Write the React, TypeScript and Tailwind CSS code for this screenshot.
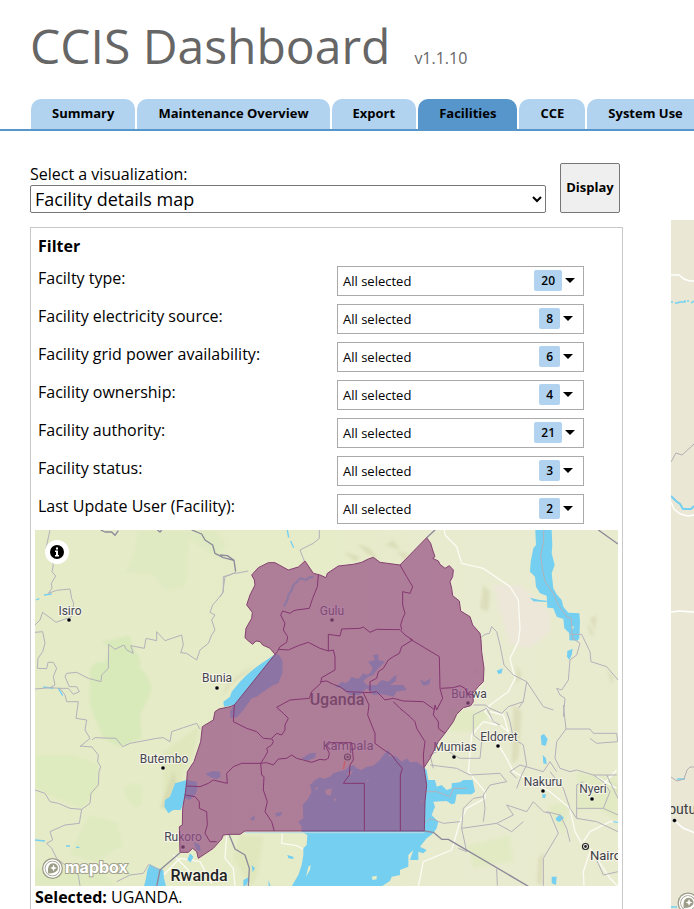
import React from "react";

const tabs = ["Summary", "Maintenance Overview", "Export", "Facilities", "CCE", "System Use"];

const filters = [
  { id: "type", label: "Facilty type:", count: 20 },
  { id: "electricity", label: "Facility electricity source:", count: 8 },
  { id: "grid", label: "Facility grid power availability:", count: 6 },
  { id: "ownership", label: "Facility ownership:", count: 4 },
  { id: "authority", label: "Facility authority:", count: 21 },
  { id: "status", label: "Facility status:", count: 3 },
  { id: "user", label: "Last Update User (Facility):", count: 2 },
];

const UGANDA =
  "M613 540 735 388 720 370 698 360 690 350 678 348 668 358 652 345 645 338 648 310 665 280 667 262 650 240 660 210 675 180 673 165 665 150 685 128 715 113 735 113 775 135 805 126 825 108 850 145 870 150 888 158 892 145 925 123 970 118 995 112 1015 102 1030 97 1050 112 1110 120 1190 38 1202 55 1208 75 1215 95 1208 100 1225 108 1230 118 1245 130 1258 122 1270 135 1268 155 1260 170 1265 190 1268 212 1288 228 1292 258 1320 275 1328 300 1350 325 1353 345 1355 380 1362 430 1360 470 1345 485 1328 505 1330 530 1322 542 1300 548 1280 568 1270 590 1245 625 1225 650 1200 700 1182 728 1190 780 1185 830 1183 918 645 918 630 928 600 928 580 930 575 942 550 970 505 1000 500 980 488 970 475 982 450 982 448 905 457 900 458 850 465 810 470 770 472 740 492 710 512 650 517 605 550 585 555 560 567 552 600 545Z";

const DISTRICTS = [
  "M865 150 862 185 848 220 838 250 800 255 790 258 780 265 758 258 752 270 765 295 760 315 773 335 770 352 750 365 742 380 735 390",
  "M745 373 775 375 805 362 835 352 870 370 895 378 910 375 915 395 915 435 875 458 872 475 845 500 838 520 780 525 740 547 760 565 775 580 765 600 765 615 755 630 740 625 725 640 730 650 725 660 710 670 713 680 705 695 692 715",
  "M895 378 895 328 930 333 935 312 990 310 1000 306 1020 322 1040 313 1110 314 1125 330 1148 345",
  "M1110 120 1130 155 1148 185 1140 205 1118 200 1118 240 1125 265 1118 280 1112 300 1115 314",
  "M1148 345 1115 365 1108 385 1090 395 1075 405 1060 430 1045 440 1040 460 1020 470 1020 500",
  "M1140 342 1228 395 1230 490 1238 520 1220 555 1215 540 1210 570 1225 590 1225 610 1245 625",
  "M1232 490 1270 488 1290 482 1305 490 1312 505 1328 510",
  "M872 470 890 468 910 478 930 485 950 500 1020 503 1040 500 1065 525 1090 520 1120 528 1180 530 1215 555",
  "M1000 503 1010 525 1017 540 1013 570 1025 600 1035 625 1035 655 1055 670 1085 690 1100 710 1117 730 1111 750 1111 918",
  "M1090 530 1110 550 1140 575 1155 590 1160 610 1185 650 1180 690 1182 728",
  "M692 715 710 713 730 720 745 702 770 700 785 690 800 700 820 705 845 712 870 703 885 705 895 700 898 685 888 665 900 653 965 653 968 680 970 705 960 720 958 750 940 775 1003 775 1003 918",
  "M692 715 695 750 702 755 700 795 712 830 705 860 725 890 733 918",
  "M613 540 610 590 650 610 680 620 700 640 725 642",
  "M692 715 635 715 610 725 590 745 592 775 570 770 550 765 535 775 510 785 470 783",
  "M465 810 495 815 508 830 508 850 530 860 532 900 525 925 540 950 560 950",
];

const BORDERS = [
  "M60 15 48 70 60 95 70 120 66 140 77 153 64 175 66 190 55 205 80 196 120 192 125 220 131 235 125 275 78 292 38 262 30 285 15 300",
  "M15 322 38 320 45 355 38 380 24 400 22 430 50 431 54 412 70 412 80 430 70 455 75 480 60 488 15 492 M60 488 90 490 105 510 110 530 145 530 138 580 170 585 165 615 180 640 150 665",
  "M85 490 115 490 130 508 148 500 140 485 118 485 105 455 110 445 140 442 175 460 213 470 215 450 235 430 236 358 255 373 282 360 290 375 310 385 302 362 343 370 348 340 380 347 380 320 405 347 455 330 460 360 452 383 470 385 500 405 510 375 535 355 545 330 555 315 545 285 555 270 540 262 548 240 578 205 585 155 610 145 617 145 655 138",
  "M570 215 580 200 580 155 600 150 617 142",
  "M823 108 810 75 850 55 868 40 868 15",
  "M15 795 45 805 60 830 85 835 120 850 155 853 180 835 183 805 205 780 207 740 212 725 203 710 205 690 186 666 150 663 M186 645 195 638 258 640 278 665 300 655 380 640 400 638 420 650 425 620 460 608 500 595 510 612",
  "M155 853 148 895 105 900 60 920 68 945 50 955 65 970 80 1000 105 1020 145 1050 150 1082",
  "M260 1070 300 1050 340 1045 355 1020 M355 1018 390 1035 380 1082",
  "M1350 340 1365 328 1378 325 1385 305 1400 320 1410 360 1422 420 1450 450 1490 470 1480 530 1465 550 M1490 470 1540 545 1570 555 M1330 540 1365 540 1380 550 1415 565 1435 545 1480 530",
  "M1628 340 1650 355 1640 390 1620 405 1615 465 1595 495 1580 490 1590 510 1605 520 1600 575 M1618 328 1655 328 1680 380 1683 410 1730 425 1764 465",
  "M1600 540 1608 612 1680 612 1690 625 1760 625 1763 650 1700 655 1680 640 M1608 612 1580 650 1575 700 1590 730 1620 740 1640 735 1690 750 1760 750",
  "M1210 730 1200 690 1240 670 1290 700 1350 700 1355 650 1330 630 1330 570 1370 550 1390 590 1410 600 M1200 720 1280 730 1320 750 1410 745 1430 770 1380 780 1360 810 1365 850 1360 890 M1430 560 1440 590 1450 640 1480 660 1490 720 1475 750 1460 790",
  "M1185 800 1220 800 1260 815 1270 790 1310 790 M1185 895 1200 880 1240 895 1290 890 M1295 910 1300 850 1330 820 1360 815 M1295 910 1400 895 1450 870 1430 840 1490 860 1510 830 1540 860 1560 865 1585 925 1540 1000 1540 1082 M1400 895 1445 920 1480 890 M1295 910 1310 980 1285 970 M1400 1032 1402 1082",
  "M1560 740 1600 790 1620 850 1640 880 1700 890 1764 920 M1460 760 1440 740 1470 720 1540 740 1560 710 1580 740 M1690 750 1720 770 1740 800 1720 850 1764 870 M1640 880 1640 780 1660 770 M1640 850 1720 850 M1700 1005 1720 1050 1764 1040",
  "M1550 860 1590 870 1610 910 1620 950 M1730 750 1764 820",
];

const NATIONAL = [
  "M212 15 225 21 245 21 255 31 265 17 M382 15 390 21 395 15 M485 15 515 27 525 45 548 60 555 85 580 98 612 106 617 140",
  "M570 90 592 92 612 106",
  "M1190 38 1215 15 M1705 15 1764 57",
  "M1183 918 1210 922 1235 943 1255 943 1495 1084",
  "M380 1085 390 1035 450 983 M598 930 615 972 645 990 658 1030 655 1084",
];

const ROADS = [
  "M1243 15 1245 30 1280 65 1295 115 1360 130 1440 185 1465 225 1470 310 1465 350 1440 400 1455 460 1435 500 1380 540 1365 560 1400 600 1360 590 1325 630 1315 740 1340 770 1365 800 1365 820 1310 850 1290 890 1265 975 1180 1010 1165 1084",
  "M1400 650 1430 700 1450 740 1560 800 1620 850 1635 920 1655 955",
  "M1410 600 1435 620 1420 570 1380 560",
  "M1660 950 1680 920 1740 890 1764 890 M1680 980 1660 1040 1662 1084 M1680 970 1740 1060 1764 1084 M1700 800 1760 735 M1700 755 1760 790",
  "M757 925 755 955 800 962 825 975 810 1084 M590 930 585 1000 610 1030 615 1084 M400 1050 450 1000 510 1010 545 1075 M430 990 480 1040",
];

const LAND_SHADES = [
  { d: "M320 15 480 15 475 90 475 150 460 190 405 200 365 150 280 145 310 90 320 30Z M455 15 560 15 590 60 560 100 500 60Z", c: "#e0eac2" },
  { d: "M180 430 200 410 225 415 240 365 213 350 300 333 305 360 330 400 330 430 350 450 365 490 355 520 330 570 335 640 270 665 220 640 195 580 180 540Z", c: "#d8e9ba" },
  { d: "M15 690 130 690 205 720 205 780 160 850 80 820 15 790Z", c: "#deebbe" },
  { d: "M275 790 310 775 340 780 335 840 310 850Z M180 870 260 890 280 960 200 1010 120 990 150 920Z M15 1030 200 1030 260 1084 15 1084Z", c: "#dfeac1" },
  { d: "M400 680 510 600 490 690 460 740 440 830 400 840Z M630 930 700 935 680 1060 660 1084 610 1000Z", c: "#e0e7bd" },
  { d: "M1640 740 1764 760 1764 890 1700 850 1640 860Z M1310 960 1440 930 1450 1010 1330 1030Z M1250 550 1390 560 1330 620 1260 620Z M1550 840 1620 830 1600 930Z", c: "#e2eac4" },
  { d: "M1390 180 1470 180 1560 260 1560 320 1500 370 1440 360 1410 260Z", c: "#ece7d8" },
];

const TERRAIN =
  "M940 80 990 95 975 110Z M980 55 1010 85 1045 105 1020 70Z M1065 60 1090 45 1110 75Z M1100 80 1135 85 1125 105Z M1360 180 1380 200 1375 260 1350 250Z M1460 420 1475 450 1460 480Z M1680 280 1700 270 1695 320Z M1450 540 1475 560 1465 700 1445 720Z M1330 430 1345 460 1340 430Z M1525 1000 1540 980 1535 1082 1520 1070Z M390 850 430 735 440 770 410 850Z M575 520 600 480 680 420 640 440 590 480Z M1730 430 1750 460 1745 480Z M1745 770 1764 790 1764 810Z M1670 290 1680 330 1695 330Z";

const WATER = [
  "M735 388 680 425 650 450 630 470 605 500 600 515 580 530 582 545 612 540 600 560 602 580 622 575 640 555 665 520 680 515 700 500 730 480 745 475 757 445 758 410 748 390Z",
  "M435 775 470 765 500 770 502 790 498 805 480 825 465 820 458 840 452 855 430 855 415 865 403 845 405 825 420 815Z",
  "M525 747 550 738 570 740 572 755 560 762 545 758Z",
  "M360 1018 380 1028 400 1035 402 1060 408 1084 342 1084 348 1060 352 1035Z",
  "M805 890 820 880 818 840 835 820 845 800 840 780 855 765 870 757 880 762 900 755 910 745 925 740 945 735 955 725 970 720 980 730 995 735 1010 725 1030 722 1050 705 1060 690 1075 675 1085 690 1100 695 1115 710 1130 700 1140 712 1160 710 1180 725 1190 735 1195 765 1215 765 1220 785 1235 780 1250 795 1265 790 1265 775 1290 772 1300 765 1328 765 1335 800 1325 808 1280 808 1275 835 1265 838 1250 828 1210 830 1215 845 1205 870 1225 890 1220 910 1210 925 1190 940 1170 965 1190 975 1180 985 1165 980 1165 1005 1140 1005 1150 975 1135 990 1135 1025 1110 1035 1110 1050 1085 1055 1080 1068 1055 1084 785 1084 805 1050 815 1020 820 990 820 970 830 960 832 930 815 920 815 905Z",
  "M915 485 925 480 935 470 945 474 955 470 965 455 985 462 1000 445 1010 450 1020 445 1028 430 1015 410 1035 405 1028 390 1045 388 1045 405 1065 410 1045 430 1030 450 1015 455 1000 468 1010 480 1040 480 1055 465 1075 470 1090 455 1100 450 1098 468 1080 480 1120 480 1130 495 1100 500 1090 515 1060 508 1030 510 1010 490 990 510 960 510 935 490Z",
  "M1170 465 1185 470 1202 460 1198 478 1180 482Z",
  "M1516 15 1565 15 1567 60 1565 85 1574 120 1565 145 1570 190 1580 208 1595 225 1600 245 1615 263 1648 265 1650 290 1648 340 1642 347 1618 346 1618 325 1603 310 1600 282 1580 275 1570 250 1552 248 1550 212 1530 205 1518 185 1515 155 1500 140 1502 110 1510 70 1518 60Z",
  "M1500 218 1525 224 1550 227 1550 231 1510 229Z",
  "M1612 378 1628 371 1625 390 1618 405 1611 395Z M1400 437 1418 430 1415 445 1405 447Z",
  "M1532 632 1542 627 1553 642 1547 662 1535 660Z M1538 690 1548 700 1550 718 1540 715Z M1537 808 1548 808 1545 820 1537 818Z M1577 880 1590 868 1602 878 1590 890 1580 888Z M1565 1055 1580 1055 1578 1080 1565 1075Z",
  "M480 985 490 995 482 1012 472 1005Z M490 950 510 960 512 980 500 975Z M660 882 675 870 672 887Z M735 865 755 860 755 870 740 875Z M665 1020 675 1030 668 1042Z M640 1065 658 1055 650 1080 640 1084Z M715 1065 722 1084 716 1084Z M772 990 790 995 790 1002 775 1000Z",
  "M815 700 840 685 858 683 855 698 830 708Z",
];

const ISLANDS =
  "M885 795 905 790 903 812 888 808Z M855 790 862 785 862 797Z M910 820 920 822 918 830Z M950 748 970 735 960 752Z M1075 690 1082 686 1085 696Z M1025 1055 1040 1052 1040 1063 1028 1065Z M1170 830 1177 826 1177 832Z M1010 768 1016 760 1014 770Z M835 1025 842 1020 840 1035 828 1055Z M1626 302 1632 305 1628 315Z";

type Place = { name: string; x: number; y: number; size: number; dot?: [number, number] };

const places: Place[] = [
  { name: "Isiro", x: 70, y: 615, size: 12, dot: [69, 620] },
  { name: "Bunia", x: 217, y: 682, size: 12, dot: [217, 688] },
  { name: "Gulu", x: 332, y: 615, size: 12, dot: [332, 620] },
  { name: "Bukwa", x: 469, y: 698, size: 12, dot: [468, 703] },
  { name: "Butembo", x: 164, y: 763, size: 12, dot: [163, 768] },
  { name: "Rukoro", x: 183, y: 841, size: 12, dot: [183, 847] },
  { name: "Kampala", x: 348, y: 750, size: 13 },
  { name: "Mumias", x: 455, y: 751, size: 12, dot: [454, 757] },
  { name: "Eldoret", x: 499, y: 741, size: 12, dot: [498, 746] },
  { name: "Nakuru", x: 543, y: 786, size: 12, dot: [543, 791] },
  { name: "Nyeri", x: 593, y: 793, size: 12, dot: [592, 799] },
];

function PlaceLabel({ place }: { place: Place }) {
  return (
    <g>
      {place.dot && <circle cx={place.dot[0]} cy={place.dot[1]} r="2.1" fill="#000" stroke="#fff" strokeWidth="0.5" />}
      <text
        x={place.x}
        y={place.y}
        fontSize={place.size}
        textAnchor="middle"
        fill="#454550"
        stroke="#f6f6ea"
        strokeWidth="2"
        paintOrder="stroke"
      >
        {place.name}
      </text>
    </g>
  );
}

function MapboxMark({ x, y }: { x: number; y: number }) {
  return (
    <g transform={`translate(${x} ${y})`}>
      <circle r="10.5" fill="#9c9c88" />
      <circle r="9.2" fill="#fff" />
      <circle r="7.8" fill="#9c9c88" />
      <circle r="7" fill="#fff" />
      <path d="M-4.3 5 C-5 -1 -4 -5.3 1 -5.3 A4.9 4.9 0 0 1 5 1.6 C2.6 4.6 -1.5 5.3 -4.3 5Z" fill="#9c9c88" />
      <path d="M1 -4 2 -1.6 4.4 -0.6 2 0.4 1 2.8 0 0.4 -2.4 -0.6 0 -1.6Z" fill="#fff" />
    </g>
  );
}

function RegionMap() {
  return (
    <svg
      viewBox="35 530 583 356"
      className="block w-full font-[Roboto,'Noto_Sans',sans-serif]"
      role="img"
      aria-label="Map of Uganda"
    >
      <defs>
        <linearGradient id="land" x1="0" x2="1">
          <stop offset="0" stopColor="#e5ebc7" />
          <stop offset="0.5" stopColor="#e6ebc8" />
          <stop offset="0.75" stopColor="#e9ebd0" />
          <stop offset="1" stopColor="#e9ebcf" />
        </linearGradient>
        <filter id="soft" x="-20%" y="-20%" width="140%" height="140%">
          <feGaussianBlur stdDeviation="4" />
        </filter>
      </defs>
      <rect x="35" y="530" width="583" height="356" fill="url(#land)" />
      <g transform="translate(30 525) scale(0.333333)" strokeLinejoin="round">
        {LAND_SHADES.map((s) => (
          <path key={s.d} d={s.d} fill={s.c} filter="url(#soft)" />
        ))}
        <path d={TERRAIN} fill="#d3d3aa" opacity="0.55" filter="url(#soft)" />
        <g fill="none" stroke="#fbfbf3" strokeWidth="4">
          {ROADS.map((d) => (
            <path key={d} d={d} />
          ))}
        </g>
        <g fill="#75cff0">
          {WATER.map((d) => (
            <path key={d} d={d} />
          ))}
        </g>
        <path d={ISLANDS} fill="#e6ebc8" />
        <g fill="none" stroke="#75cff0" strokeWidth="4">
          <path d="M772 15 776 38 M782 48 791 68" />
          <path d="M18 225 28 221 M42 210 65 207 M40 486 70 490 M85 490 98 512 M15 945 45 948 M108 963 120 963 M138 967 148 967 M1750 890 1764 892" />
        </g>
        <g fill="none" stroke="#b3b1ba" strokeWidth="3">
          {BORDERS.map((d) => (
            <path key={d} d={d} />
          ))}
          <path d="M1541 15 1541 50 1532 90 1537 130 1545 170 1570 205 1585 240 1610 275 1624 280 1626 325 1630 345" />
        </g>
        <g fill="none" stroke="#8c8a9a" strokeWidth="4">
          {NATIONAL.map((d) => (
            <path key={d} d={d} />
          ))}
        </g>
      </g>

      {places.map((p) => (
        <PlaceLabel key={p.name} place={p} />
      ))}
      <circle cx="347.5" cy="757" r="3" fill="none" stroke="#333" strokeWidth="1.2" />
      <circle cx="347.5" cy="757" r="1.2" fill="#333" />
      <circle cx="585.5" cy="846.5" r="3" fill="#fff" stroke="#222" strokeWidth="1.2" />
      <circle cx="585.5" cy="846.5" r="1.4" fill="#222" />
      <text x="590" y="860" fontSize="13" fill="#3c3c44" stroke="#f6f6ea" strokeWidth="2" paintOrder="stroke">
        Nairobi
      </text>
      <text x="337" y="705" fontSize="16" fontWeight="500" textAnchor="middle" fill="#333">
        Uganda
      </text>
      <text
        x="199"
        y="881"
        fontSize="16"
        fontWeight="500"
        textAnchor="middle"
        fill="#222"
        stroke="#f6f6ea"
        strokeWidth="2"
        paintOrder="stroke"
      >
        Rwanda
      </text>

      <g transform="translate(30 525) scale(0.333333)" strokeLinejoin="round">
        <path d={UGANDA} fill="#954e83" fillOpacity="0.7" stroke="#84406f" strokeWidth="3" />
        <path d="M645 923 H1183" stroke="#b9dce8" strokeWidth="3" />
        <g fill="none" stroke="#84366f" strokeWidth="3">
          {DISTRICTS.map((d) => (
            <path key={d} d={d} />
          ))}
        </g>
        <path
          d="M850 155 835 158 830 165 810 160 800 172 790 180 783 200 775 210 772 225 762 245"
          fill="none"
          stroke="#8c78a3"
          strokeWidth="6"
        />
        <path d="M944 708 941 732" stroke="#cf5a67" strokeWidth="4" />
      </g>

      <MapboxMark x={52.5} y={868.5} />
      <text
        x="65"
        y="873"
        fontSize="16"
        fontWeight="700"
        fill="#fff"
        stroke="#a3a38f"
        strokeWidth="2"
        paintOrder="stroke"
        className="font-[Inter,sans-serif]"
      >
        mapbox
      </text>
    </svg>
  );
}

function SideMap() {
  return (
    <svg
      viewBox="671 220 400 700"
      preserveAspectRatio="xMinYMin slice"
      className="block h-[700px] w-full font-[Roboto,sans-serif]"
      role="img"
      aria-label="Facility details map"
    >
      <rect x="671" y="220" width="400" height="700" fill="#eae8d5" />
      <g fill="none" stroke="#fff">
        <path d="M671 275 H679 L684 279 690 281 H700" strokeWidth="1.5" />
        <path d="M671 502 674 509 680 514 688 516 700 514" strokeWidth="1.3" />
        <path d="M671 612 680 611 692 612 700 612 M675 821 683 828 700 835" strokeWidth="1.5" />
      </g>
      <g fill="none" stroke="#75cff0">
        <path d="M671 302 H673 M675 303 H677 L680 302 H685 V300 M687 301 H689 M691 303 694 301" strokeWidth="1.5" />
        <path d="M671 496 676 501 680 504 683 509 691 509 694 506" strokeWidth="2" />
        <path d="M671 907 H677 M677 779 H685" strokeWidth="1.3" />
      </g>
      <path
        d="M671 462 676 453 682 455 694 444 M671 777 677 781 684 779 687 770 690 767 H700"
        fill="none"
        stroke="#b0aeb2"
      />
      <circle cx="674.5" cy="820.5" r="2.1" fill="#000" stroke="#fff" strokeWidth="0.5" />
      <text x="656" y="814" fontSize="14" fill="#3c3c44">
        Mbutu
      </text>
      <MapboxMark x={688} y={903} />
    </svg>
  );
}

export default function App() {
  return (
    <div className="min-h-screen overflow-x-hidden bg-white font-['Open_Sans','Noto_Sans',sans-serif] text-base text-black">
      <header className="flex items-baseline gap-6 px-[30px] pt-3 text-[#666]">
        <h1 className="text-[48px] leading-[68px]">CCIS Dashboard</h1>
        <span>v1.1.10</span>
      </header>

      <nav className="mt-[19px] flex gap-[2px] overflow-hidden border-b-2 border-[#5796cb] pl-[31px]">
        {tabs.map((tab) => (
          <button
            key={tab}
            type="button"
            className={`h-[30px] shrink-0 rounded-t-[10px] px-[21px] text-[13px] font-bold ${
              tab === "Facilities" ? "bg-[#5796cb]" : "bg-[#b1d3f0]"
            }`}
          >
            {tab}
          </button>
        ))}
      </nav>

      <main className="flex gap-12 pt-8 pl-[30px]">
        <section className="w-[593px] shrink-0">
          <div className="flex gap-[14px]">
            <div className="flex-1">
              <label htmlFor="visualization" className="block leading-[22px]">
                Select a visualization:
              </label>
              <select
                id="visualization"
                className="block h-7 w-full rounded-[2px] border border-[#767676] bg-white text-[18px]"
              >
                <option>Facility details map</option>
              </select>
            </div>
            <button
              type="button"
              className="mr-[3px] h-[50px] w-[60px] rounded-[2px] border border-[#767676] bg-[#efefef] text-[13px] font-bold"
            >
              Display
            </button>
          </div>

          <div className="mt-[14px] border border-[#c8c8c8] px-1 pt-[6px] pb-6">
            <h2 className="px-[3px] leading-6 font-bold">Filter</h2>
            <div className="mt-2 flex flex-col gap-2 px-[3px]">
              {filters.map((f) => (
                <div key={f.id} className="flex">
                  <span id={`label-${f.id}`} className="w-[299px] leading-6">
                    {f.label}
                  </span>
                  <button
                    type="button"
                    aria-haspopup="listbox"
                    aria-labelledby={`label-${f.id}`}
                    className={`flex h-[30px] w-[247px] items-center border border-[#aaa] bg-white pl-[5px] text-[13px] ${
                      f.count < 10 ? "pr-[10px]" : "pr-2"
                    }`}
                  >
                    <span className="flex-1 pt-[2px] text-left">All selected</span>
                    <span className="flex items-center pb-[2px]">
                      <span className="rounded-[2px] bg-[#b1d3f0] px-[7px] text-[12px] leading-[21px] font-semibold">
                        {f.count}
                      </span>
                      <span className="ml-[3px] border-x-[5px] border-t-[5px] border-x-transparent border-t-black" />
                    </span>
                  </button>
                </div>
              ))}
            </div>
            <div className="relative mt-[6px]">
              <RegionMap />
              <button
                type="button"
                aria-label="Map attribution"
                className="absolute top-[10px] left-[10px] flex size-6 items-center justify-center rounded-full bg-white"
              >
                <svg viewBox="0 0 14 14" className="size-[14px]">
                  <circle cx="7" cy="7" r="7" />
                  <path d="M6 2.500h2v2H6z M5 5.500h3v4.500h1v1.500H5V10h1V7H5z" fill="#fff" />
                </svg>
              </button>
            </div>
            <p className="leading-[22px]">
              <b>Selected:</b> UGANDA.
            </p>
          </div>
        </section>

        <div className="mt-[57px] min-w-0 flex-1">
          <SideMap />
        </div>
      </main>
    </div>
  );
}
